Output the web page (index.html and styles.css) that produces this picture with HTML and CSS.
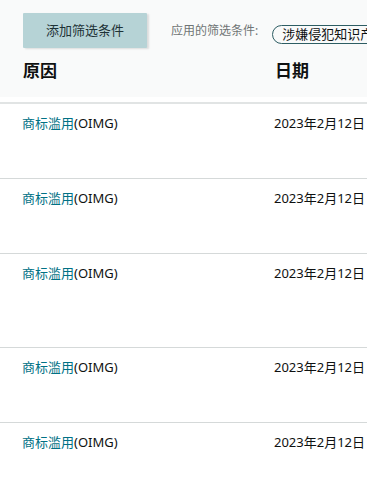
FILE: index.html
```html
<!DOCTYPE html>
<html lang="zh">
<head>
<meta charset="utf-8">
<title>筛选</title>
<link rel="stylesheet" href="styles.css">
</head>
<body>
<div class="page">
  <div class="head">
    <div class="toolbar">
      <button class="add-btn">添加筛选条件</button>
      <span class="applied-label">应用的筛选条件:</span>
      <span class="pill">涉嫌侵犯知识产权</span>
    </div>
    <div class="cols">
      <div class="th">原因</div>
      <div class="th">日期</div>
    </div>
  </div>
  <div class="head-rule"></div>
  <div class="row"><div class="reason"><a class="link">商标滥用</a>(OIMG)</div><div class="date">2023年2月12日</div></div>
  <div class="row"><div class="reason"><a class="link">商标滥用</a>(OIMG)</div><div class="date">2023年2月12日</div></div>
  <div class="row row-tall"><div class="reason"><a class="link">商标滥用</a>(OIMG)</div><div class="date">2023年2月12日</div></div>
  <div class="row"><div class="reason"><a class="link">商标滥用</a>(OIMG)</div><div class="date">2023年2月12日</div></div>
  <div class="row"><div class="reason"><a class="link">商标滥用</a>(OIMG)</div><div class="date">2023年2月12日</div></div>
</div>
</body>
</html>
```
FILE: styles.css
```css
html, body {
  margin: 0;
  padding: 0;
  background: #ffffff;
}
body {
  width: 367px;
  height: 490px;
  overflow: hidden;
  font-family: "Noto Sans", "Noto Sans CJK SC", sans-serif;
  color: #0f1111;
}
.page {
  width: 600px;
}
.head {
  background: #f9fafa;
  height: 97px;
  box-sizing: border-box;
  padding-top: 13px;
}
.toolbar {
  display: flex;
  align-items: flex-start;
  padding-left: 23px;
  height: 35px;
}
.add-btn {
  width: 124px;
  height: 35px;
  border: none;
  border-radius: 1px;
  background: #b6d3d6;
  box-shadow: 2px 1px 2px rgba(0, 0, 0, 0.12);
  font-family: "Noto Sans", "Noto Sans CJK SC", sans-serif;
  font-size: 13px;
  color: #1e3236;
  padding: 0;
  line-height: 35px;
}
.applied-label {
  margin-left: 24px;
  font-size: 12px;
  line-height: 35px;
  color: #707575;
}
.pill {
  margin-left: 14px;
  margin-top: 12px;
  height: 19px;
  box-sizing: border-box;
  border: 1px solid #2d5d63;
  border-radius: 10px;
  padding: 0 9px;
  font-size: 13px;
  line-height: 17px;
  white-space: nowrap;
  color: #0f1111;
}
.cols {
  display: grid;
  grid-template-columns: 252px auto;
  padding-left: 23px;
  margin-top: 11px;
}
.th {
  font-size: 17px;
  font-weight: 700;
  line-height: 24px;
  color: #0f1111;
}
.head-rule {
  height: 5px;
  border-bottom: 2px solid #e1e4e4;
  background: #ffffff;
}
.row {
  display: grid;
  grid-template-columns: 252px auto;
  padding: 9px 0 0 22px;
  height: 75px;
  box-sizing: border-box;
  border-bottom: 1px solid #d5d9d9;
  font-size: 13px;
  line-height: 20px;
}
.row-tall {
  height: 94px;
}
.link {
  color: #007185;
  text-decoration: none;
}
.reason {
  color: #0f1111;
}
.date {
  white-space: nowrap;
  color: #0f1111;
}
```
